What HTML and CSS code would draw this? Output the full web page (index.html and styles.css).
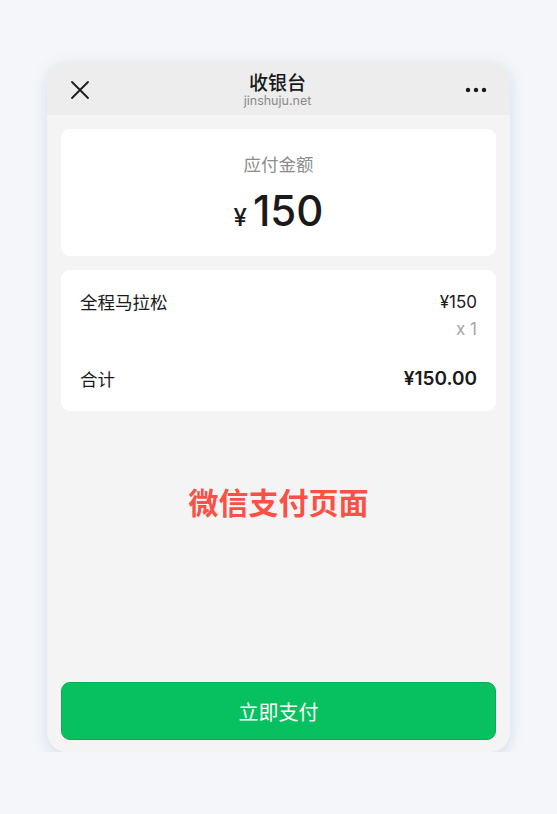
FILE: index.html
```html
<!DOCTYPE html>
<html lang="zh">
<head>
  <meta charset="UTF-8" />
  <meta name="viewport" content="width=device-width, initial-scale=1.0"/>
  <title>收银台</title>
  <link rel="stylesheet" href="styles.css">
</head>
<body>
  <div class="phone">
    <!-- ======= Шапка ======= -->
    <div class="nav">
      <svg class="nav-close" width="20" height="20" viewBox="0 0 20 20">
        <path d="M2 2 L18 18 M18 2 L2 18" stroke="#1a1a1a" stroke-width="1.8" stroke-linecap="round"/>
      </svg>
      <div class="nav-title">
        <div class="nav-name">收银台</div>
        <div class="nav-host">jinshuju.net</div>
      </div>
      <svg class="nav-more" width="22" height="6" viewBox="0 0 22 6">
        <circle cx="3" cy="3" r="2.2" fill="#1a1a1a"/>
        <circle cx="11" cy="3" r="2.2" fill="#1a1a1a"/>
        <circle cx="19" cy="3" r="2.2" fill="#1a1a1a"/>
      </svg>
    </div>

    <div class="content">
      <div class="card amount">
        <div class="amount-label">应付金额</div>
        <div class="amount-value"><span class="yen">¥</span>150</div>
      </div>

      <div class="card order">
        <div class="row">
          <span>全程马拉松</span>
          <span class="num">¥150</span>
        </div>
        <div class="row qty">x 1</div>
        <div class="row total">
          <span>合计</span>
          <span class="total-sum">¥150.00</span>
        </div>
      </div>

      <div class="notice">微信支付页面</div>

      <button class="pay">立即支付</button>
    </div>
  </div>
</body>
</html>
```

FILE: styles.css
```css
/* ======= Общие стили ======= */
body {
  margin: 0;
  background-color: #f4f6f9;
  font-family: "Noto Sans CJK SC", "Noto Sans", sans-serif;
  color: #1a1a1a;
  display: flex;
  justify-content: center;
  padding-top: 62px;
}
.phone {
  width: 463px;
  height: 690px;
  background: #f4f4f4;
  border-radius: 20px;
  overflow: hidden;
  display: flex;
  flex-direction: column;
  box-shadow: 0 4px 14px rgba(120, 150, 200, 0.25);
}

/* ======= Шапка ======= */
.nav {
  height: 53px;
  background: #ededed;
  display: flex;
  align-items: center;
  justify-content: space-between;
  padding: 0 23px;
}
.nav-close {
  margin-top: 2px;
}
.nav-title {
  text-align: center;
  margin-top: 3px;
}
.nav-name {
  font-size: 19px;
  font-weight: 500;
  line-height: 20px;
}
.nav-host {
  font-family: "Inter", "Liberation Sans", sans-serif;
  font-size: 12.5px;
  color: #8a8a8a;
  line-height: 15px;
  margin-top: 1px;
}
.nav-more {
  margin-top: 2px;
}

/* ======= Контент ======= */
.content {
  flex: 1;
  display: flex;
  flex-direction: column;
  padding: 14px 14px 12px;
  gap: 14px;
}
.card {
  background: #fff;
  border-radius: 9px;
}
.amount {
  height: 127px;
  text-align: center;
  padding-top: 22px;
  box-sizing: border-box;
}
.amount-label {
  font-size: 17.5px;
  color: #8c8c8c;
  line-height: 26px;
}
.amount-value {
  font-family: "Inter", "Liberation Sans", sans-serif;
  font-size: 42px;
  font-weight: 500;
  line-height: 50px;
  margin-top: 9px;
}
.yen {
  font-size: 24px;
  margin-right: 6px;
}

.order {
  padding: 19px;
}
.row {
  display: flex;
  justify-content: space-between;
  font-size: 17.5px;
  line-height: 26px;
}
.num {
  font-family: "Inter", "Liberation Sans", sans-serif;
  font-size: 17px;
}
.qty {
  justify-content: flex-end;
  color: #a6a6a6;
  font-family: "Inter", "Liberation Sans", sans-serif;
  font-size: 17px;
  margin-top: 1px;
}
.total {
  margin-top: 24px;
  align-items: center;
}
.total-sum {
  font-family: "Inter", "Liberation Sans", sans-serif;
  font-size: 19px;
  font-weight: 600;
}

.notice {
  flex: 1;
  text-align: center;
  color: #fa5046;
  font-size: 30px;
  font-weight: 600;
  padding-top: 54px;
}

.pay {
  height: 58px;
  background: #07c160;
  border: 1px solid #06ad56;
  border-radius: 9px;
  color: #fff;
  font-family: "Noto Sans CJK SC", sans-serif;
  font-size: 20px;
  cursor: pointer;
}
```
